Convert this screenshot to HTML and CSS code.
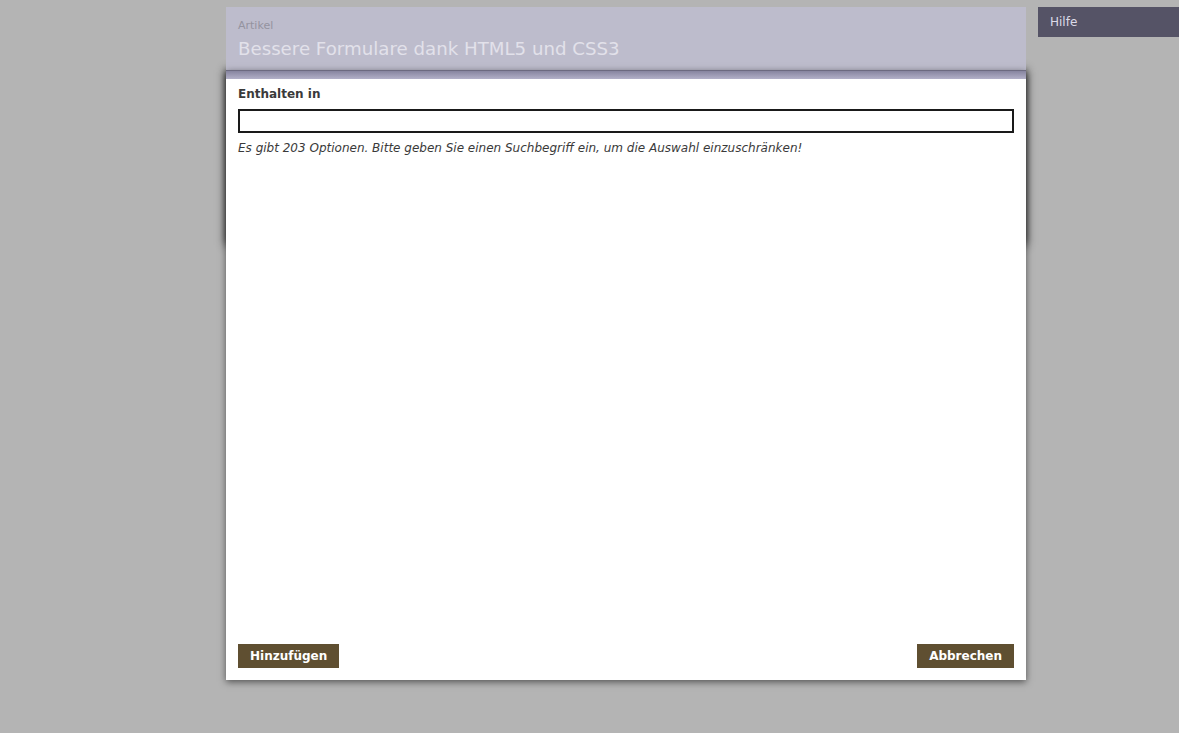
FILE: index.html
```html
<!DOCTYPE html>
<html>
<head>
  <title>Bessere Formulare dank HTML5 und CSS3</title>
  <link rel="stylesheet" href="styles.css">
</head>
<body>
  <div class="page">
    <div class="main">
      <div class="article-head">
        <div class="kind">Artikel</div>
        <div class="title">Bessere Formulare dank HTML5 und CSS3</div>
      </div>
    </div>
    <div class="sidebar">
      <div class="help">Hilfe</div>
    </div>
  </div>

  <div class="dialog">
    <div class="dialog-top"></div>
    <div class="dialog-body">
      <label class="field-label" for="search">Enthalten in</label>
      <input type="text" id="search" class="search">
      <p class="hint">Es gibt 203 Optionen. Bitte geben Sie einen Suchbegriff ein, um die Auswahl einzuschränken!</p>
    </div>
    <div class="dialog-buttons">
      <button class="btn">Hinzufügen</button>
      <button class="btn">Abbrechen</button>
    </div>
  </div>
</body>
</html>
```

FILE: styles.css
```css
body {
  margin: 0;
  background: #b4b4b4;
  font-family: "DejaVu Sans", Verdana, sans-serif;
  font-size: 12px;
  color: #333;
  height: 733px;
  overflow: hidden;
}

.page {
  display: flex;
  gap: 12px;
  padding: 7px 0 0 226px;
}

.main {
  width: 800px;
}

.article-head {
  background: #bdbccc;
  height: 63px;
  padding: 12px 12px 0;
  box-sizing: border-box;
}

.kind {
  font-size: 11px;
  color: #94939f;
}

.title {
  font-size: 18.2px;
  color: #e2e1ea;
  margin-top: 6px;
}

.sidebar {
  flex: 1;
}

.help {
  background: #555366;
  color: #dcdbe8;
  font-size: 12px;
  height: 30px;
  line-height: 30px;
  padding-left: 12px;
}

.dialog {
  position: absolute;
  top: 70px;
  left: 226px;
  width: 800px;
  height: 610px;
  background: #fff;
  display: flex;
  flex-direction: column;
  box-shadow: 0 2px 7px rgba(0, 0, 0, 0.55);
}

.dialog::before {
  content: "";
  position: absolute;
  top: 0;
  left: 0;
  right: 0;
  height: 175px;
  box-shadow: 0 0 9px rgba(0, 0, 0, 0.85);
  z-index: -1;
}

.dialog-top {
  height: 8px;
  border-top: 1px solid #6c6a80;
  background: linear-gradient(to bottom, #86849f, #b2b0c8);
}

.dialog-body {
  flex: 1;
  padding: 8px 12px 0;
}

.field-label {
  display: block;
  font-size: 12px;
  font-weight: bold;
  color: #3a3a3a;
}

.search {
  display: block;
  width: 100%;
  box-sizing: border-box;
  height: 24px;
  margin-top: 8px;
  border: 2px solid #1a1a1a;
  background: #fff;
}

.hint {
  margin: 8px 0 0;
  font-size: 12px;
  font-style: italic;
  color: #3a3a3a;
}

.dialog-buttons {
  display: flex;
  justify-content: space-between;
  padding: 0 12px 12px;
}

.btn {
  background: #5f4f31;
  color: #fff;
  border: none;
  font-family: "DejaVu Sans", Verdana, sans-serif;
  font-size: 12px;
  font-weight: bold;
  height: 24px;
  padding: 0 12px;
}
```
